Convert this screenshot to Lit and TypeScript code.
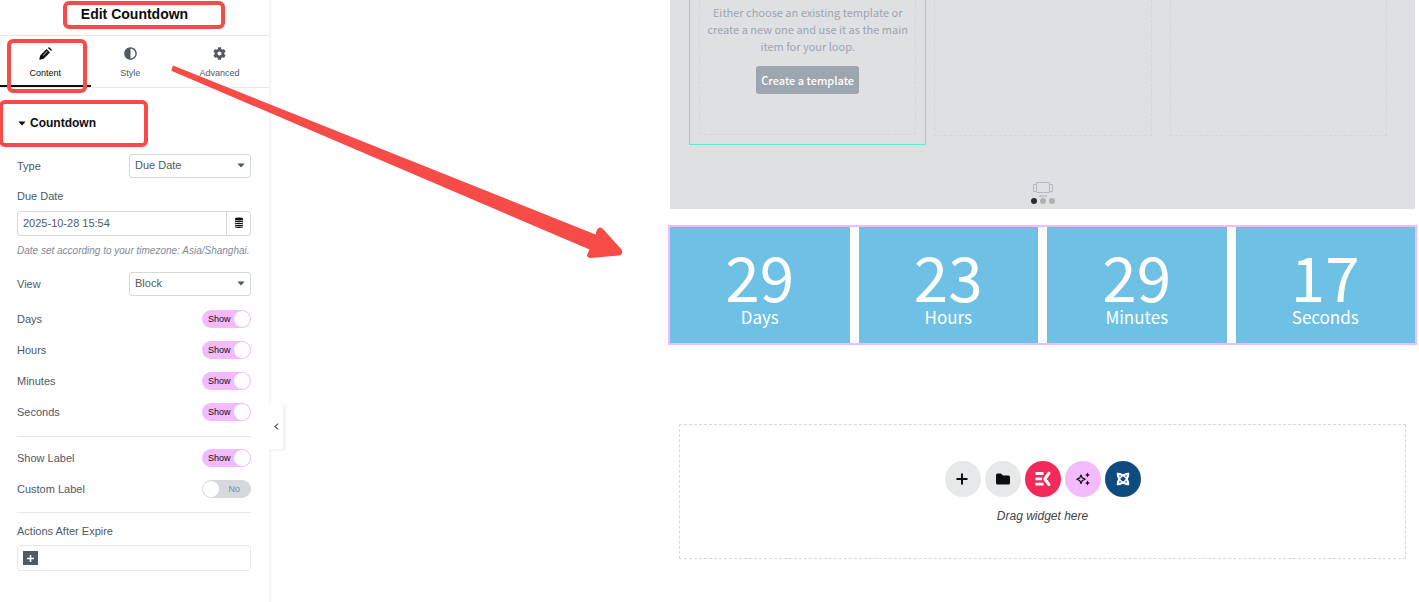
import { LitElement, html, css, svg } from "lit";
import { customElement, property } from "lit/decorators.js";

const PENCIL = "M300 80l132 132L180 464 40 500q-34 6-28-28l36-140zM350 36l20-20q24-22 48 0l78 78q22 24 0 48l-20 20zM150 330l170-170 18 18-170 170z";
const HALF = "M8 256c0 137 111 248 248 248s248-111 248-248S393 8 256 8 8 119 8 256zm248 192V64c106 0 192 86 192 192s-86 192-192 192z";
const COG = "M487.4 315.7l-42.6-24.6c4.3-23.2 4.3-47 0-70.2l42.6-24.6c4.9-2.8 7.1-8.6 5.5-14-11.1-35.6-30-67.8-54.7-94.6-3.8-4.1-10-5.1-14.8-2.3L380.8 110c-17.9-15.4-38.5-27.3-60.8-35.1V25.8c0-5.6-3.9-10.5-9.4-11.7-36.7-8.2-74.3-7.8-109.2 0-5.5 1.2-9.4 6.1-9.4 11.7V75c-22.2 7.9-42.8 19.8-60.8 35.1L88.7 85.5c-4.9-2.8-11-1.9-14.8 2.3-24.7 26.7-43.6 58.9-54.7 94.6-1.7 5.4.6 11.2 5.5 14L67.3 221c-4.3 23.2-4.3 47 0 70.2l-42.6 24.6c-4.9 2.8-7.1 8.6-5.5 14 11.1 35.6 30 67.8 54.7 94.6 3.8 4.1 10 5.1 14.8 2.3l42.6-24.6c17.9 15.4 38.5 27.3 60.8 35.1v49.2c0 5.6 3.9 10.5 9.4 11.7 36.7 8.2 74.3 7.8 109.2 0 5.5-1.2 9.4-6.1 9.4-11.7v-49.2c22.2-7.9 42.8-19.8 60.8-35.1l42.6 24.6c4.9 2.8 11 1.9 14.8-2.3 24.7-26.7 43.6-58.9 54.7-94.6 1.5-5.5-.7-11.3-5.6-14.1zM256 336c-44.1 0-80-35.9-80-80s35.9-80 80-80 80 35.9 80 80-35.9 80-80 80z";

@customElement("editor-panel")
class EditorPanel extends LitElement {
  static styles = css`
    :host {
      display: block;
      position: relative;
      flex: 0 0 269px;
      background: #fff;
      box-shadow: 1px 0 4px rgba(0, 0, 0, 0.08);
      color: #515962;
      font: 11px/16px "Liberation Sans", Arial, sans-serif;
    }
    * { box-sizing: border-box; }
    button, input, select { font: inherit; color: inherit; margin: 0; }
    button { border: 0; padding: 0; background: none; cursor: pointer; }
    .title {
      margin: 0;
      padding: 4px 0 11px;
      border-bottom: 1px solid #e6e8ea;
      font-size: 14px;
      line-height: 20px;
      text-align: center;
      color: #0c0d0e;
    }
    .tabs { display: flex; border-bottom: 1px solid #e6e8ea; }
    .tab {
      display: flex;
      flex: 1 1 auto;
      flex-direction: column;
      align-items: center;
      gap: 7px;
      padding: 11px 0 6px;
      border-bottom: 2px solid transparent;
      font-size: 9px;
      line-height: 12px;
    }
    .tab svg { width: 13px; height: 13px; fill: currentColor; fill-rule: evenodd; }
    .tab.active { color: #0c0d0e; border-color: #0c0d0e; }
    .heading {
      display: flex;
      align-items: center;
      gap: 4px;
      width: 100%;
      padding: 27px 18px 23px;
      font-size: 12px;
      font-weight: bold;
      color: #0c0d0e;
    }
    .heading svg { width: 8px; height: 5px; }
    .controls { display: flex; flex-direction: column; padding: 0 18px 32px 17px; }
    .row { display: flex; align-items: center; justify-content: space-between; }
    .picker { position: relative; width: 122px; }
    .picker select {
      display: block;
      width: 100%;
      height: 24px;
      padding: 0 20px 2px 5px;
      border: 1px solid #d5d8dc;
      border-radius: 3px;
      background: #fff;
      appearance: none;
    }
    .picker svg { position: absolute; right: 6px; top: 9px; width: 8px; height: 5px; pointer-events: none; }
    .stacked { display: flex; flex-direction: column; gap: 7px; margin: 10px 0 13px; }
    .date { display: flex; height: 25px; border: 1px solid #d5d8dc; border-radius: 3px; }
    .date input { flex: 1; min-width: 0; padding: 0 5px 1px; border: 0; background: none; }
    .date button {
      display: grid;
      width: 24px;
      padding-top: 5px;
      justify-items: center;
      border-left: 1px solid #d5d8dc;
    }
    .date svg { width: 10px; height: 11px; }
    .hint { margin: 0; font-size: 10px; font-style: italic; white-space: nowrap; color: #818a96; }
    .group {
      display: flex;
      flex-direction: column;
      gap: 13px;
      padding: 14px 0 15px;
      border-bottom: 1px solid #e6e8ea;
    }
    .group + .group { padding: 12px 0 14px; }
    .group .row { height: 18px; }
    .switch { display: grid; width: 49px; height: 18px; }
    .switch > * { grid-area: 1 / 1; }
    .switch input {
      display: flex;
      align-items: center;
      width: 49px;
      height: 18px;
      padding: 0 1px;
      border-radius: 9px;
      background: #d5d8dc;
      appearance: none;
    }
    .switch input::before { content: ""; width: 16px; height: 16px; border-radius: 50%; background: #fff; }
    .switch input:checked { justify-content: flex-end; background: #f3bafd; }
    .state {
      align-self: center;
      padding: 0 11px 0 6px;
      font-size: 9px;
      line-height: 12px;
      text-align: right;
      pointer-events: none;
      color: #818a96;
    }
    .switch input:checked + .state { text-align: left; color: #0c0d0e; }
    .actions { display: flex; flex-direction: column; gap: 6px; padding-top: 10px; }
    .chips { display: flex; padding: 5px; border: 1px solid #e6e8ea; border-radius: 3px; }
    .add { display: grid; place-items: center; width: 15px; height: 14px; background: #515962; }
    .add svg { width: 9px; height: 9px; }
    .collapse {
      position: absolute;
      left: 100%;
      top: 404px;
      display: grid;
      place-items: center;
      width: 14px;
      height: 45px;
      background: #fff;
      box-shadow: 2px 1px 3px rgba(0, 0, 0, 0.08);
    }
    .collapse svg { width: 5px; height: 7px; }
  `;

  private caret() {
    return html`<svg viewBox="0 0 8 5" aria-hidden="true"><path d="M1 .5h6q.7 0 .2.6L4.5 4q-.5.5-1 0L.8 1.1Q.3.5 1 .5z" fill="currentColor" /></svg>`;
  }

  private tab(label: string, path: string, active = false) {
    return html`<button class="tab ${active ? "active" : ""}" role="tab" aria-selected=${active}>
      <svg viewBox="0 0 512 512" aria-hidden="true"><path d=${path} /></svg>${label}
    </button>`;
  }

  private select(id: string, label: string, value: string) {
    return html`<div class="row">
      <label for=${id}>${label}</label>
      <div class="picker"><select id=${id}><option>${value}</option></select>${this.caret()}</div>
    </div>`;
  }

  private toggle(id: string, label: string, on = true) {
    return html`<div class="row">
      <label for=${id}>${label}</label>
      <span class="switch"><input type="checkbox" id=${id} .checked=${on} /><span class="state">${on ? "Show" : "No"}</span></span>
    </div>`;
  }

  render() {
    return html`
      <h1 class="title">Edit Countdown</h1>
      <div class="tabs" role="tablist">
        ${this.tab("Content", PENCIL, true)}${this.tab("Style", HALF)}${this.tab("Advanced", COG)}
      </div>
      <button class="heading" aria-expanded="true">${this.caret()}Countdown</button>
      <div class="controls">
        ${this.select("type", "Type", "Due Date")}
        <div class="stacked">
          <label for="due">Due Date</label>
          <div class="date">
            <input id="due" type="text" value="2025-10-28 15:54" />
            <button aria-label="Dynamic tags">
              <svg viewBox="0 0 10 11" aria-hidden="true">
                <path d="M1 1.8Q1 .5 5 .5t4 1.3v1Q9 3.4 5 3.4T1 2.8z" fill="#0c0d0e" />
                <path d="M1 4q1 .7 4 .7T9 4M1 6q1 .7 4 .7T9 6M1 8q1 .7 4 .7T9 8M1.3 9.7q1 .6 3.7.6t3.7-.6" fill="none" stroke="#0c0d0e" stroke-width="1.2" />
              </svg>
            </button>
          </div>
          <p class="hint">Date set according to your timezone: Asia/Shanghai.</p>
        </div>
        ${this.select("view", "View", "Block")}
        <div class="group">
          ${this.toggle("days", "Days")}${this.toggle("hours", "Hours")}
          ${this.toggle("minutes", "Minutes")}${this.toggle("seconds", "Seconds")}
        </div>
        <div class="group">
          ${this.toggle("show-label", "Show Label")}${this.toggle("custom-label", "Custom Label", false)}
        </div>
        <div class="actions">
          <span id="actions">Actions After Expire</span>
          <div class="chips" role="group" aria-labelledby="actions">
            <button class="add" aria-label="Add action">
              <svg viewBox="0 0 9 9" aria-hidden="true"><path d="M4.5 1v7M1 4.5h7" stroke="#fff" stroke-width="1.6" /></svg>
            </button>
          </div>
        </div>
      </div>
      <button class="collapse" aria-label="Hide panel">
        <svg viewBox="0 0 5 7" aria-hidden="true"><path d="M4.2.6L1 3.5l3.2 2.9" fill="none" stroke="#515962" stroke-width="1.2" /></svg>
      </button>
    `;
  }
}

@customElement("countdown-widget")
class CountdownWidget extends LitElement {
  @property({ attribute: false }) units: [string, string][] = [];

  static styles = css`
    :host {
      display: grid;
      grid-template-columns: repeat(4, 1fr);
      gap: 9px;
      outline: 2px solid #f3bafd;
      color: #fff;
      text-align: center;
    }
    .unit { display: flex; flex-direction: column; gap: 2px; padding: 18px 0 16px; background: #6ec1e4; }
    .digits { font-size: 62px; line-height: 60px; }
    .label { font-size: 17px; line-height: 20px; }
  `;

  render() {
    return this.units.map(
      ([value, label]) => html`<div class="unit"><span class="digits">${value}</span><span class="label">${label}</span></div>`
    );
  }
}

@customElement("page-preview")
class PagePreview extends LitElement {
  static styles = css`
    :host {
      display: flex;
      flex: 1;
      flex-direction: column;
      min-width: 0;
      padding: 0 4px 0 401px;
      font-family: "Noto Sans CJK SC", sans-serif;
    }
    * { box-sizing: border-box; }
    button { margin: 0; padding: 0; border: 0; font: inherit; cursor: pointer; }
    .loop { padding: 0 28px 5px 29px; margin-bottom: 18px; background: #dfe0e4; }
    .items { display: grid; grid-template-columns: repeat(3, 1fr); gap: 18px; }
    .item {
      height: 136px;
      border: 1px dashed #d3d5d9;
      border-top: 0;
    }
    .item.selected {
      display: flex;
      flex-direction: column;
      align-items: center;
      gap: 11px;
      height: 135px;
      padding: 4px 4px 0;
      outline: 1px solid #5eead4;
      outline-offset: 9px;
      color: #9da5ae;
      font-size: 11px;
      line-height: 17px;
      text-align: center;
    }
    .item p { margin: 0; }
    .create {
      padding: 6px 5px 5px;
      border-radius: 3px;
      background: #9da5ae;
      color: #fff;
      font-weight: 500;
    }
    .pager { display: flex; flex-direction: column; align-items: center; margin-top: 46px; }
    .pager svg { display: block; width: 20px; height: 16px; }
    .dots { display: flex; gap: 3px; }
    .dot { width: 6px; height: 6px; padding: 0; border-radius: 50%; background: #afb0b3; }
    .dot.on { background: #2b2c2f; }
    .drop {
      display: flex;
      flex-direction: column;
      align-items: center;
      gap: 10px;
      margin: 81px 9px 0;
      padding: 36px 0 33px;
      border: 1px dashed #d5d8dc;
      color: #3f444b;
      font: italic 12px/18px "Liberation Sans", Arial, sans-serif;
    }
    .tools { display: flex; gap: 4px; }
    .tool { display: grid; place-items: center; width: 36px; height: 36px; border-radius: 50%; background: #e6e8ea; }
    .tool svg { display: block; width: 18px; height: 18px; }
    .kit { background: #f2295b; }
    .ai { background: #f3bafd; }
    .addons { background: #104b80; }
  `;

  private tool(name: string, kind: string, art: unknown) {
    return html`<button class="tool ${kind}" aria-label=${name}><svg viewBox="0 0 18 18" aria-hidden="true">${art}</svg></button>`;
  }

  render() {
    return html`
      <section class="loop">
        <div class="items">
          <div class="item selected">
            <p>Either choose an existing template or create a new one and use it as the main item for your loop.</p>
            <button class="create">Create a template</button>
          </div>
          <div class="item"></div>
          <div class="item"></div>
        </div>
        <div class="pager">
          <svg viewBox="0 0 20 16" fill="none" stroke="#b4bac1" aria-hidden="true">
            <path d="M3.5.5h13v10h-13zM3 2.5H.5v7H3M17 2.5h2.5v7H17" />
            <path d="M6.5 14h2M9.200 14h1.700M11.700 14h2" stroke-width="2" />
          </svg>
          <div class="dots">
            <button class="dot on" aria-label="Slide 1"></button>
            <button class="dot" aria-label="Slide 2"></button>
            <button class="dot" aria-label="Slide 3"></button>
          </div>
        </div>
      </section>
      <countdown-widget
        .units=${[["29", "Days"], ["23", "Hours"], ["29", "Minutes"], ["17", "Seconds"]]}
      ></countdown-widget>
      <section class="drop">
        <div class="tools">
          ${this.tool("Add container", "", svg`<path d="M8 3.5v11M2.5 9h11" stroke="#0c0d0e" stroke-width="2"/>`)}
          ${this.tool("Template library", "", svg`<path d="M2 5q0-1.500 1.500-1.500h3.500l2 2h5.500Q16 5.500 16 7v6q0 1.500-1.500 1.500h-11Q2 14.500 2 13z" fill="#0c0d0e"/>`)}
          ${this.tool("Kit library", "kit", svg`<path d="M1.500 3.500H9.500M1.500 8.800H8M1.500 14.200H9.500" stroke="#fff" stroke-width="2.800"/><path d="M15 3.200L10.800 9l4.200 5.600" fill="none" stroke="#fff" stroke-width="3" stroke-linejoin="round" stroke-linecap="round"/>`)}
          ${this.tool("Build with AI", "ai", svg`<path d="M7 5l1.300 2.900L11.200 9.200 8.300 10.500 7 13.400 5.700 10.500 2.800 9.200 5.700 7.900z" fill="none" stroke="#0c0d0e" stroke-width="1.200" stroke-linejoin="round"/><path d="M13.500 2.500l.8 1.700 1.700.8-1.700.8-.8 1.700-.8-1.700-1.700-.8 1.700-.8zM13.500 10.500l.8 1.700 1.700.8-1.700.8-.8 1.700-.8-1.700-1.700-.8 1.700-.8z" fill="#0c0d0e"/>`)}
          ${this.tool("Addon templates", "addons", svg`<g fill="none" stroke="#fff" stroke-width="1.400" stroke-linejoin="round"><path d="M3.500 3.500Q9 7 14.500 3.500 11 9 14.500 14.500 9 11 3.500 14.500 7 9 3.500 3.500z"/><path d="M3.500 3.500Q3 7 7 11T14.500 14.500Q15 11 11 7T3.500 3.500zM14.500 3.500Q15 7 11 11T3.500 14.500Q3 11 7 7T14.500 3.500z"/></g>`)}
        </div>
        <span>Drag widget here</span>
      </section>
    `;
  }
}

@customElement("app-root")
class AppRoot extends LitElement {
  static styles = css`
    :host { display: block; position: relative; overflow: hidden; background: #fff; }
    .editor { display: flex; min-height: 100vh; }
    .marks { position: absolute; left: 0; top: 0; width: 640px; height: 270px; pointer-events: none; }
  `;

  render() {
    return html`
      <main class="editor">
        <editor-panel></editor-panel>
        <page-preview></page-preview>
      </main>
      <svg class="marks" viewBox="0 0 640 270" aria-hidden="true">
        <g fill="none" stroke="#f74b47" stroke-width="4">
          <rect x="65" y="3" width="158" height="24" rx="4" />
          <rect x="9" y="41" width="76" height="50" rx="4" />
          <rect x="1" y="102" width="145" height="43" rx="4" />
        </g>
        <path d="M173 65.500L595.500 234.500 597 229.500Q600 225.500 603.500 229.500L621.500 249.500Q624 254 619 255.500L590 258Q586 257.500 587.500 254L589.500 249.500 171.300 70.700z" fill="#f74b47" />
      </svg>
    `;
  }
}
